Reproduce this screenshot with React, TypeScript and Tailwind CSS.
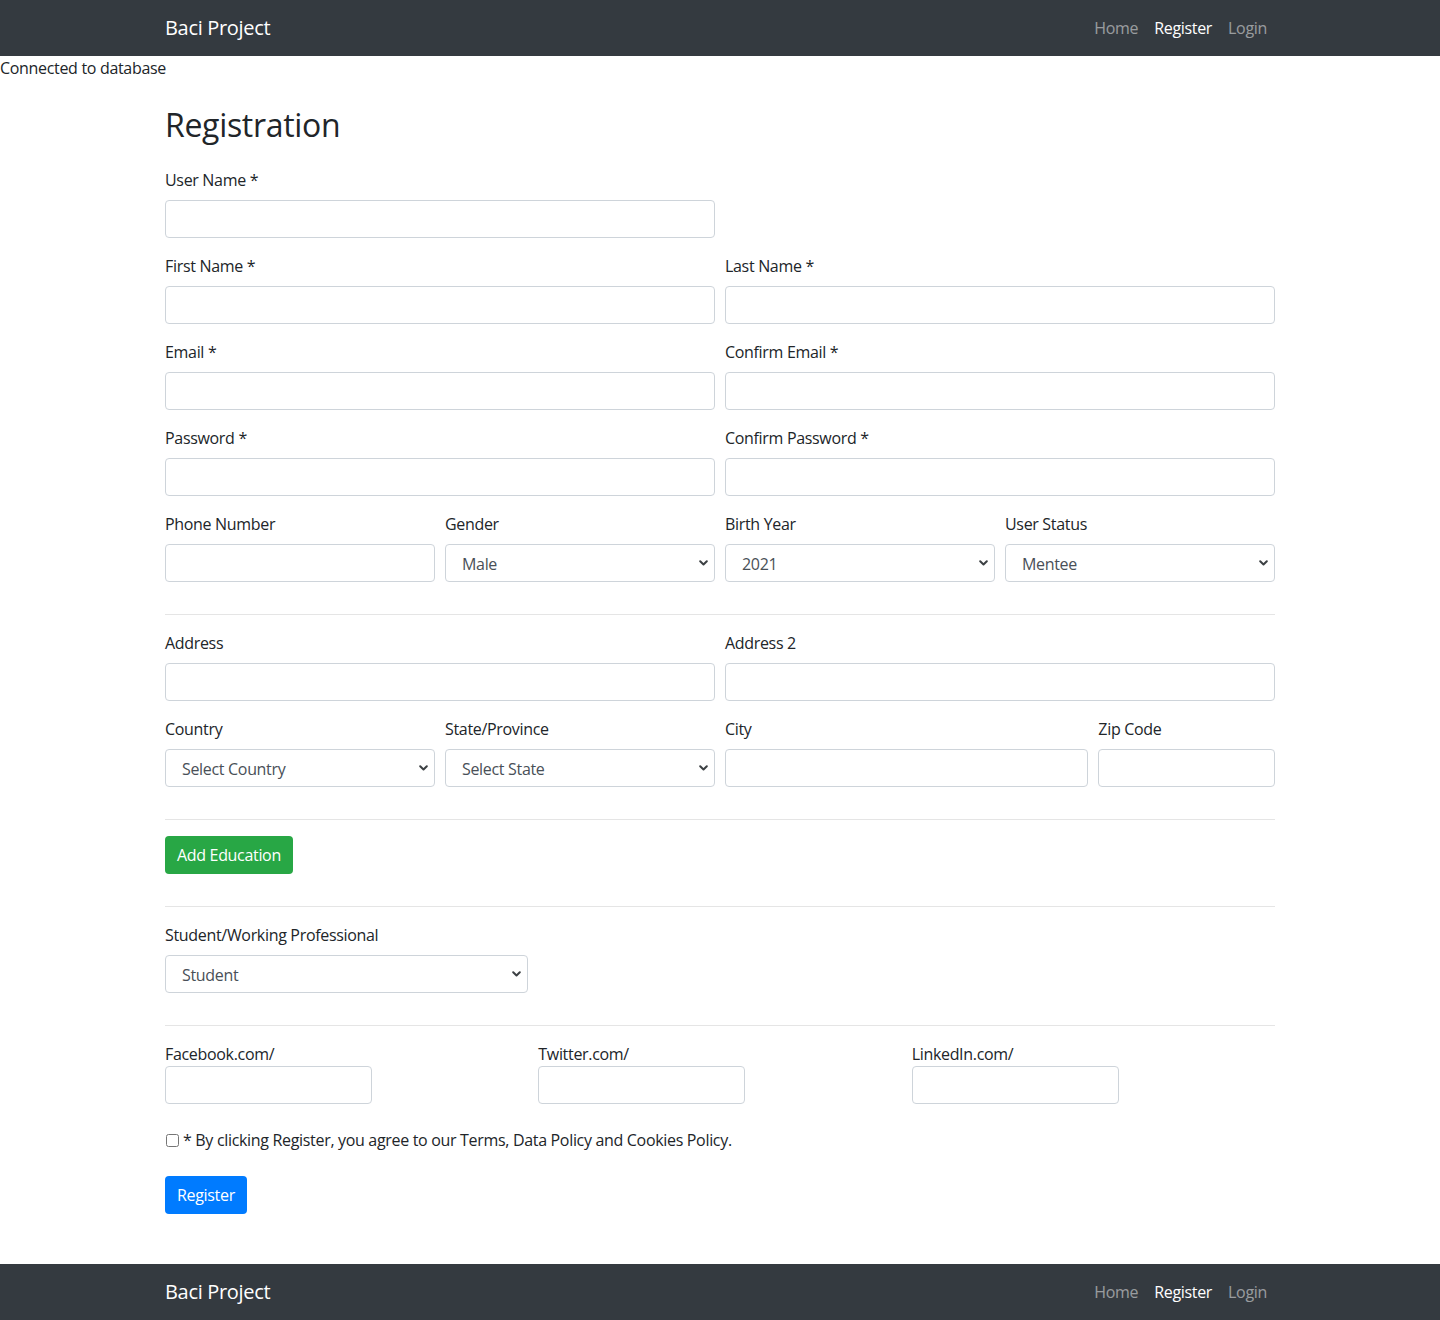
import React from "react";

const font = { fontFamily: '"Open Sans", "Noto Sans", sans-serif' };

function Chevron() {
  return (
    <svg
      width="9"
      height="6"
      viewBox="0 0 9 6"
      className="pointer-events-none absolute right-[7px] top-1/2 -translate-y-1/2"
    >
      <path d="M1.2 1.2l3.3 3.3 3.3-3.3" fill="none" stroke="#3c4043" strokeWidth="2" strokeLinecap="round" strokeLinejoin="round" />
    </svg>
  );
}

function TextInput({ type = "text", w = "w-full" }: { type?: string; w?: string }) {
  return (
    <input
      type={type}
      className={`block h-[38px] ${w} rounded-[4px] border border-[#ced4da] bg-white px-3 text-base text-[#495057] outline-none`}
    />
  );
}

function Select({ value, options }: { value: string; options?: string[] }) {
  return (
    <div className="relative">
      <select
        defaultValue={value}
        className="block h-[38px] w-full appearance-none rounded-[4px] border border-[#ced4da] bg-white pt-px pl-4 pr-8 text-base text-[#495057] outline-none"
      >
        {(options || [value]).map((o) => (
          <option key={o}>{o}</option>
        ))}
      </select>
      <Chevron />
    </div>
  );
}

function Field({
  label,
  span,
  children,
}: {
  label: string;
  span: string;
  children: React.ReactNode;
}) {
  return (
    <div className={span}>
      <label className="mb-2 block">{label}</label>
      {children}
    </div>
  );
}

function NavBar() {
  return (
    <nav className="h-14 bg-[#343a40]">
      <div className="mx-auto flex h-full w-[1140px] items-center justify-between px-[15px]">
        <a className="text-xl leading-[30px] text-white">Baci Project</a>
        <div className="flex">
          <a className="px-2 text-white/50">Home</a>
          <a className="px-2 text-white">Register</a>
          <a className="px-2 text-white/50">Login</a>
        </div>
      </div>
    </nav>
  );
}

function Divider() {
  return <div className="mt-8 mb-4 border-t border-black/10" />;
}

export default function App() {
  return (
    <div className="bg-white text-base leading-6 tracking-[-0.02em] text-[#212529]" style={font}>
      <NavBar />
      <p>Connected to database</p>

      <div className="mx-auto mt-[26px] w-[1140px] px-[15px] pb-[50px]">
        <h2 className="mb-[24px] text-[32px] font-medium leading-[38px]">Registration</h2>

        <form>
          <div className="grid grid-cols-12 gap-x-[10px] gap-y-4">
            <Field label="User Name *" span="col-span-6">
              <TextInput />
            </Field>
            <div className="col-span-6" />

            <Field label="First Name *" span="col-span-6">
              <TextInput />
            </Field>
            <Field label="Last Name *" span="col-span-6">
              <TextInput />
            </Field>

            <Field label="Email *" span="col-span-6">
              <TextInput type="email" />
            </Field>
            <Field label="Confirm Email *" span="col-span-6">
              <TextInput type="email" />
            </Field>

            <Field label="Password *" span="col-span-6">
              <TextInput type="password" />
            </Field>
            <Field label="Confirm Password *" span="col-span-6">
              <TextInput type="password" />
            </Field>

            <Field label="Phone Number" span="col-span-3">
              <TextInput />
            </Field>
            <Field label="Gender" span="col-span-3">
              <Select value="Male" options={["Male", "Female", "Other"]} />
            </Field>
            <Field label="Birth Year" span="col-span-3">
              <Select value="2021" />
            </Field>
            <Field label="User Status" span="col-span-3">
              <Select value="Mentee" options={["Mentee", "Mentor"]} />
            </Field>
          </div>

          <Divider />

          <div className="grid grid-cols-12 gap-x-[10px] gap-y-4">
            <Field label="Address" span="col-span-6">
              <TextInput />
            </Field>
            <Field label="Address 2" span="col-span-6">
              <TextInput />
            </Field>

            <Field label="Country" span="col-span-3">
              <Select value="Select Country" />
            </Field>
            <Field label="State/Province" span="col-span-3">
              <Select value="Select State" />
            </Field>
            <Field label="City" span="col-span-4">
              <TextInput />
            </Field>
            <Field label="Zip Code" span="col-span-2">
              <TextInput />
            </Field>
          </div>

          <Divider />

          <button
            type="button"
            className="block h-[38px] rounded-[4px] bg-[#28a745] px-3 text-white"
          >
            Add Education
          </button>

          <Divider />

          <div className="grid grid-cols-12 gap-x-[10px]">
            <Field label="Student/Working Professional" span="col-span-4">
              <Select value="Student" options={["Student", "Working Professional"]} />
            </Field>
          </div>

          <Divider />

          <div className="grid grid-cols-12 gap-x-[10px]">
            {["Facebook.com/", "Twitter.com/", "LinkedIn.com/"].map((s) => (
              <div key={s} className="col-span-4">
                <label className="block">{s}</label>
                <TextInput w="w-[207px]" />
              </div>
            ))}
          </div>

          <div className="mt-6 flex items-center">
            <input type="checkbox" className="ml-[1px] mr-[4px] h-[13px] w-[13px]" />
            <span>* By clicking Register, you agree to our Terms, Data Policy and Cookies Policy.</span>
          </div>

          <button
            type="button"
            className="mt-6 block h-[38px] rounded-[4px] bg-[#007bff] px-3 text-white"
          >
            Register
          </button>
        </form>
      </div>

      <NavBar />
    </div>
  );
}
